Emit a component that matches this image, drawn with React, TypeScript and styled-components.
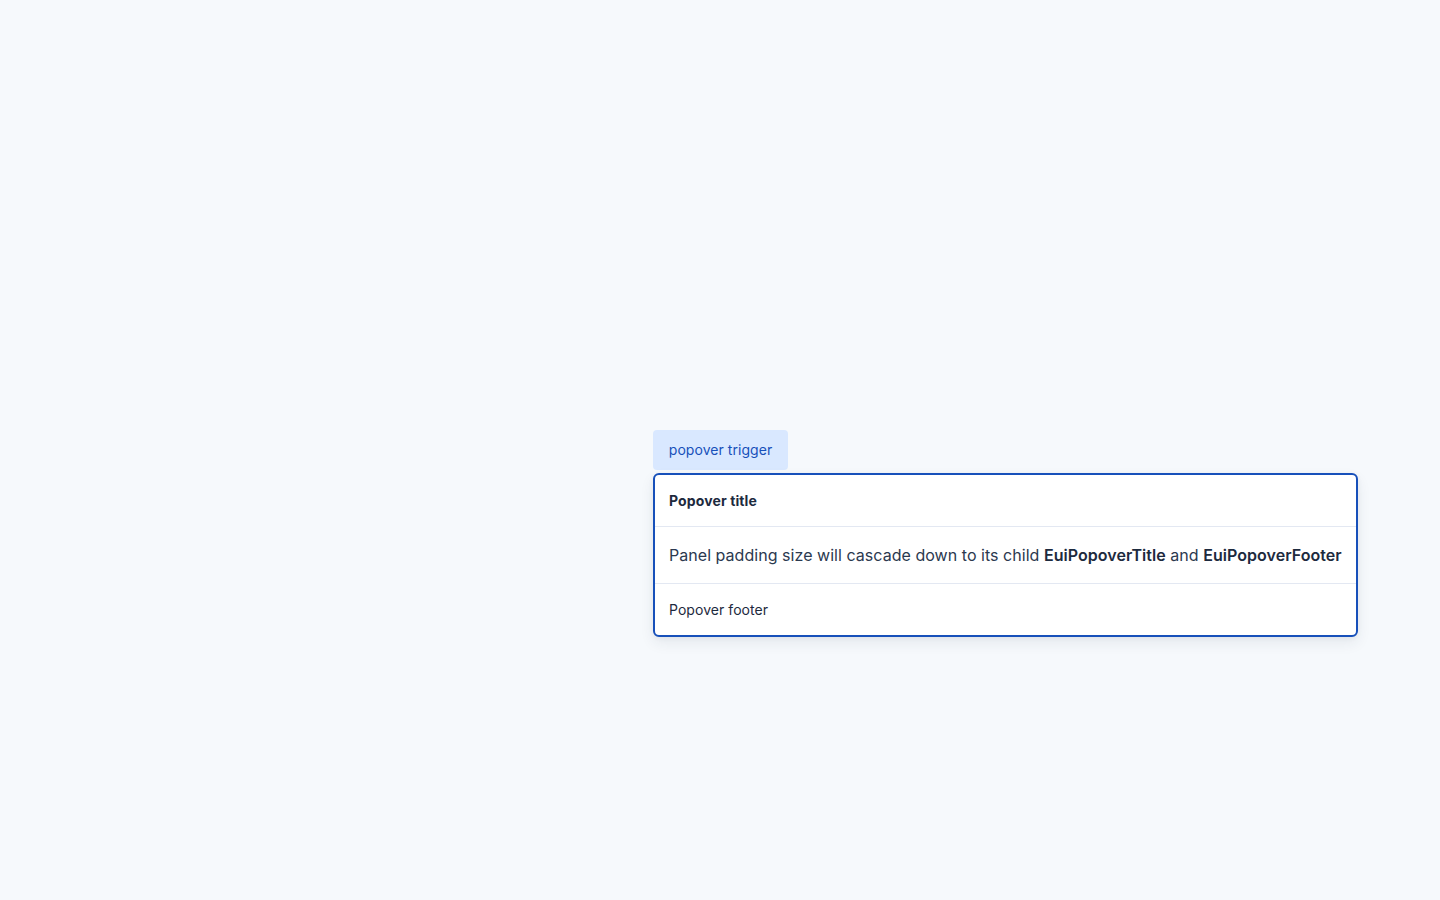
import React from "react";
import styled, { createGlobalStyle } from "styled-components";

const GlobalStyle = createGlobalStyle`
    html, body {
        margin: 0;
        padding: 0;
        background: #f6f9fc;
        font-family: Inter, "Noto Sans", sans-serif;
    }
`;

const Page = styled.div`
    min-height: 100vh;
    padding-left: 1px;
    box-sizing: border-box;
    display: flex;
    align-items: center;
    justify-content: center;
`;

const Anchor = styled.div`
    position: relative;
    display: inline-block;
`;

const TriggerButton = styled.button`
    width: 135px;
    height: 40px;
    padding: 0 0 1px;
    border: none;
    border-radius: 4px;
    background: #d9e8ff;
    color: #1750ba;
    font-family: inherit;
    font-size: 14px;
    font-weight: 400;
    letter-spacing: 0.05px;
    cursor: pointer;
`;

const Panel = styled.div`
    position: absolute;
    top: 43px;
    left: 0;
    background: #fff;
    border: 2px solid #1750ba;
    border-radius: 6px;
    box-shadow: 0 1px 5px rgba(43, 57, 79, 0.06),
        0 6px 14px rgba(43, 57, 79, 0.08);
    white-space: nowrap;
    color: #1d2a3e;
`;

const Section = styled.div<{ $divider?: boolean }>`
    padding: 0 14px;
    display: flex;
    align-items: center;
    border-bottom: ${(p) => (p.$divider ? "1px solid #e3e8f2" : "none")};
`;

const Title = styled(Section)`
    height: 50px;
    padding-bottom: 1px;
    font-size: 14px;
    font-weight: 700;
    letter-spacing: 0.12px;
`;

const Body = styled(Section)`
    height: 56px;
    font-size: 16px;
    letter-spacing: 0.04px;
    color: #2b394f;

    strong {
        font-weight: 600;
        color: #1d2a3e;
    }
`;

const Footer = styled(Section)`
    height: 51px;
    font-size: 14px;
    letter-spacing: 0.05px;
`;

const App: React.FC = () => {
    return (
        <>
            <GlobalStyle />
            <Page>
                <Anchor>
                    <TriggerButton>popover trigger</TriggerButton>
                    <Panel>
                        <Title $divider>Popover title</Title>
                        <Body $divider>
                            <span>
                                Panel padding size will cascade down to its child{" "}
                                <strong>EuiPopoverTitle</strong> and{" "}
                                <strong>EuiPopoverFooter</strong>
                            </span>
                        </Body>
                        <Footer>Popover footer</Footer>
                    </Panel>
                </Anchor>
            </Page>
        </>
    );
};

export default App;
